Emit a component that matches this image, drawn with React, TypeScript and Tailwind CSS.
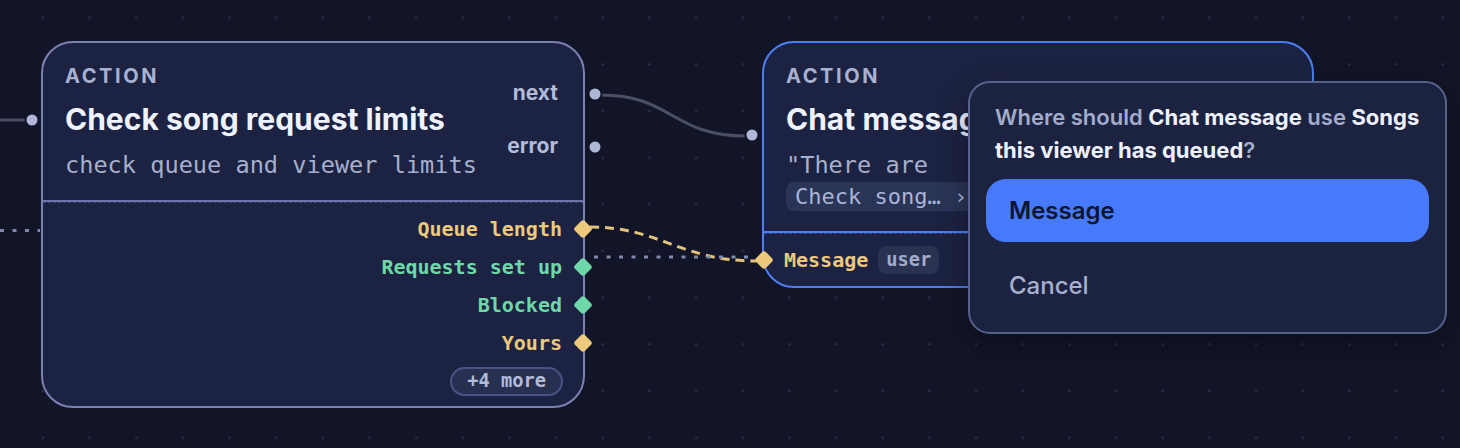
import React from "react";

const mono = "font-['DejaVu_Sans_Mono',monospace]";

function Diamond({ color, side }: { color: string; side: "left" | "right" }) {
  return (
    <span
      className={`absolute top-1/2 -translate-y-1/2 w-[14px] h-[14px] ${
        side === "right" ? "right-[-7px]" : "left-[-7px]"
      }`}
    >
      <span className={`block w-[14px] h-[14px] rotate-45 rounded-[3px] ${color}`} />
    </span>
  );
}

function PortRow({ label, text, dot }: { label: string; text: string; dot: string }) {
  return (
    <div className="relative h-[38px] flex items-center justify-end pr-[21px]">
      <span className={`${mono} text-[20px] font-bold ${text}`}>{label}</span>
      <Diamond color={dot} side="right" />
    </div>
  );
}

function Edges() {
  return (
    <svg className="absolute inset-0 pointer-events-none" width={1460} height={448}>
      {/* incoming wire on the left node */}
      <line x1={0} y1={120} x2={26} y2={120} stroke="#484d61" strokeWidth={3} />
      <line
        x1={0}
        y1={230.5}
        x2={40}
        y2={230.5}
        stroke="#7f88ad"
        strokeWidth={3}
        strokeDasharray="4 8.5"
      />
      {/* next -> chat message */}
      <path
        d="M 601 95 C 672 95, 672 136, 746 136"
        fill="none"
        stroke="#4a4f63"
        strokeWidth={3}
      />
      {/* queue length -> message (pending) */}
      <path
        d="M 590 227 C 660 227, 680 261, 756 261"
        fill="none"
        stroke="#e3c37b"
        strokeWidth={3}
        strokeDasharray="9 6"
      />
      {/* requests set up -> message */}
      <line
        x1={594}
        y1={257}
        x2={756}
        y2={257}
        stroke="#7f88ad"
        strokeWidth={3}
        strokeDasharray="4 8.5"
      />
      {[
        [32, 120],
        [595, 94],
        [595, 147],
        [752, 135],
      ].map(([cx, cy]) => (
        <circle key={`${cx}-${cy}`} cx={cx} cy={cy} r={6.5} fill="#aeb8d6" stroke="#111527" strokeWidth={2} />
      ))}
    </svg>
  );
}

export default function App() {
  return (
    <div className="relative w-[1460px] h-[448px] overflow-hidden bg-[#111527] bg-[radial-gradient(circle,#262c41_1.1px,transparent_1.6px)] bg-[size:46.67px_46.67px] bg-[position:19.67px_-5.6px] font-['Inter',sans-serif]">
      <Edges />

      {/* Check song request limits */}
      <div className="absolute left-[41px] top-[41px] w-[544px] h-[367px] rounded-[32px] border-2 border-[#7c80b2] bg-[#1c2342] flex flex-col">
        <div className="h-[159px] shrink-0 border-b-2 border-[#6f74a8] flex justify-between pl-[22px] pr-[25px] pt-[21px]">
          <div className="flex flex-col">
            <div className="text-[20px] leading-[24px] font-bold tracking-[0.13em] text-[#a9b1d0]">ACTION</div>
            <div className="mt-[13px] text-[30px] leading-[36px] font-bold text-[#eef2ff] whitespace-nowrap">
              Check song request limits
            </div>
            <div className={`mt-[14px] ${mono} text-[23.6px] leading-[28px] text-[#a6afcc]`}>
              check queue and viewer limits
            </div>
          </div>
          <div className="flex flex-col items-end pt-[17px] gap-[29px] text-[21px] leading-[24px] font-bold text-[#b3bbd8]">
            <span>next</span>
            <span>error</span>
          </div>
        </div>
        <div className="flex-1 border-t border-dashed border-[#3d4472] flex flex-col pt-[7px]">
          <PortRow label="Queue length" text="text-[#ecc97d]" dot="bg-[#ecc97d]" />
          <PortRow label="Requests set up" text="text-[#6fd8a9]" dot="bg-[#6fd8a9]" />
          <PortRow label="Blocked" text="text-[#6fd8a9]" dot="bg-[#6fd8a9]" />
          <PortRow label="Yours" text="text-[#ecc97d]" dot="bg-[#ecc97d]" />
          <div className="self-end mr-[20px] mt-[5px] h-[29px] px-[15px] flex items-center rounded-full border-2 border-[#4b5384] bg-[#283052]">
            <span className={`${mono} text-[18.7px] font-bold text-[#b3bbd8]`}>+4 more</span>
          </div>
        </div>
      </div>

      {/* Chat message */}
      <div className="absolute left-[762px] top-[41px] w-[552px] h-[247px] rounded-[32px] border-2 border-[#4b7ff2] bg-[#1c2342] flex flex-col">
        <div className="h-[190px] shrink-0 border-b-2 border-[#4b7ff2] flex flex-col pl-[22px] pt-[21px]">
          <div className="text-[20px] leading-[24px] font-bold tracking-[0.13em] text-[#a9b1d0]">ACTION</div>
          <div className="mt-[13px] text-[30px] leading-[36px] font-bold text-[#eef2ff] whitespace-nowrap">
            Chat message
          </div>
          <div className={`mt-[14px] ${mono} text-[23.6px] leading-[28px] text-[#a6afcc]`}>"There are</div>
          <div className="mt-[3px] flex">
            <span className={`${mono} text-[22px] leading-[29px] px-[9px] rounded-[8px] bg-[#2a3457] text-[#a9b4d6] whitespace-nowrap`}>
              Check song… › songs
            </span>
          </div>
        </div>
        <div className="flex-1 border-t border-dashed border-[#3a4a86] relative flex items-center pl-[20px]">
          <Diamond color="bg-[#ecc97d]" side="left" />
          <span className={`${mono} text-[20px] font-bold text-[#ecc97d]`}>Message</span>
          <span className={`ml-[10px] h-[28px] px-[8px] flex items-center rounded-[8px] bg-[#2a3252] ${mono} text-[18.7px] font-bold text-[#a3accb]`}>
            user
          </span>
        </div>
      </div>

      {/* Input picker */}
      <div className="absolute left-[968px] top-[81px] w-[479px] h-[253px] rounded-[22px] border-2 border-[#56618c] bg-[#1c2341] shadow-[0_10px_30px_rgba(0,0,0,0.35)] flex flex-col px-[16px] pt-[18px]">
        <p className="px-[9px] text-[22px] leading-[33px] font-semibold text-[#a3accb] whitespace-nowrap">
          Where should <span className="font-bold text-[#eef1fb]">Chat message</span> use{" "}
          <span className="font-bold text-[#eef1fb]">Songs</span>
          <br />
          <span className="font-bold text-[#eef1fb]">this viewer has queued</span>?
        </p>
        <button className="mt-[12px] h-[63px] rounded-[20px] bg-[#477afa] pl-[23px] text-left text-[24px] font-semibold text-[#0c1633]">
          Message
        </button>
        <button className="mt-[12px] h-[63px] rounded-[20px] pl-[23px] text-left text-[24px] font-medium text-[#a7b1cd]">
          Cancel
        </button>
      </div>
    </div>
  );
}
